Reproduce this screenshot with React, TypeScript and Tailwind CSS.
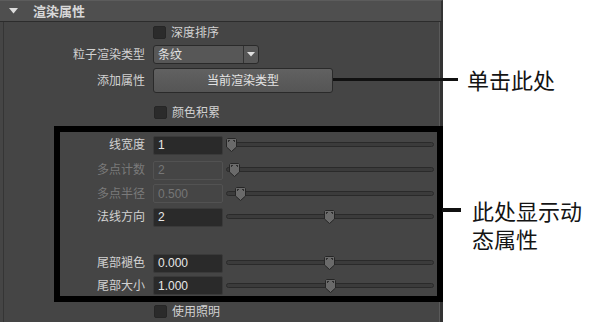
import React from "react";

type Row = {
  label: string;
  value: string;
  disabled: boolean;
  thumb: string;
  h: string;
};

const rowsTop: Row[] = [
  { label: "线宽度", value: "1", disabled: false, thumb: "left-[0px]", h: "h-[26px]" },
  { label: "多点计数", value: "2", disabled: true, thumb: "left-[3px]", h: "h-[24px]" },
  { label: "多点半径", value: "0.500", disabled: true, thumb: "left-[9px]", h: "h-[23px]" },
  { label: "法线方向", value: "2", disabled: false, thumb: "left-[98px]", h: "h-[24px]" },
];
const rowsBottom: Row[] = [
  { label: "尾部褪色", value: "0.000", disabled: false, thumb: "left-[98px]", h: "h-[24px]" },
  { label: "尾部大小", value: "1.000", disabled: false, thumb: "left-[99px]", h: "h-[21px]" },
];

function Thumb() {
  return (
    <svg width="11" height="14" viewBox="0 0 11 14" className="block">
      <polygon
        points="0.5,1.5 1.5,0.5 9.5,0.5 10.5,1.5 10.5,9 5.5,13.5 0.5,9"
        fill="#6a6a6a"
        stroke="#262626"
        strokeWidth="1"
      />
      <line x1="2.5" y1="2" x2="2.5" y2="4" stroke="#2e2e2e" strokeWidth="1" />
      <line x1="2" y1="2.5" x2="4" y2="2.5" stroke="#2e2e2e" strokeWidth="1" />
      <line x1="8.5" y1="2" x2="8.5" y2="4" stroke="#2e2e2e" strokeWidth="1" />
      <line x1="7" y1="2.5" x2="9" y2="2.5" stroke="#2e2e2e" strokeWidth="1" />
    </svg>
  );
}

function SliderRow({ row }: { row: Row }) {
  return (
    <div className={`flex items-center ${row.h}`}>
      <div
        className={`w-[85px] text-right leading-none ${
          row.disabled ? "text-[#7a7a7a]" : "text-[#d2d2d2]"
        }`}
      >
        {row.label}
      </div>
      <div
        className={`ml-[8px] w-[70px] h-[19px] rounded-[2px] border flex items-center pl-[4px] leading-none ${
          row.disabled
            ? "bg-[#454545] border-[#525252] text-[#767676]"
            : "bg-[#2a2a2a] border-[#3a3a3a] text-[#e8e8e8]"
        }`}
      >
        {row.value}
      </div>
      <div className="ml-[3px] w-[208px] relative h-[14px]">
        <div className="absolute left-0 right-0 top-[4px] h-[5px] rounded-full border border-[#2a2a2a] bg-[#3b3b3b]" />
        <div className={`absolute top-0 ${row.thumb}`}>
          <Thumb />
        </div>
      </div>
    </div>
  );
}

function Checkbox({ label }: { label: string }) {
  return (
    <div className="flex items-center">
      <div className="w-[13px] h-[13px] rounded-[2px] bg-[#2b2b2b] border border-[#262626]" />
      <div className="ml-[5px] text-[#d2d2d2] leading-none">{label}</div>
    </div>
  );
}

export default function App() {
  return (
    <div
      className="relative w-[605px] h-[322px] flex bg-white overflow-hidden text-[12px]"
      style={{ fontFamily: '"Liberation Sans", "Noto Sans CJK SC", sans-serif' }}
    >
      {/* Panel */}
      <div className="w-[443px] h-[322px] bg-[#454545] flex flex-col">
        {/* Header */}
        <div className="h-[22px] shrink-0 bg-[#4f4f4f] border-t border-[#5c5c5c] border-b border-b-[#2c2c2c] border-r-[2px] border-r-[#333333] flex items-center">
          <svg width="9" height="6" viewBox="0 0 9 6" className="ml-[9px]">
            <polygon points="0,0 9,0 4.5,5.5" fill="#dcdcdc" />
          </svg>
          <div className="ml-[15px] font-bold text-[13px] text-[#d8d8d8] leading-none">
            渲染属性
          </div>
        </div>
        {/* Body */}
        <div className="flex-1 ml-[3px] border-l border-[#353535] border-r-[3px] border-r-[#333333] flex flex-col">
          <div className="flex-1 border-r border-[#5a5a5a] flex flex-col">
            <div className="h-[21px] flex items-center pl-[149px]">
              <Checkbox label="深度排序" />
            </div>
            <div className="h-[23px] flex items-center">
              <div className="w-[141px] text-right text-[#d2d2d2] leading-none">粒子渲染类型</div>
              <div className="ml-[8px] w-[106px] h-[19px] rounded-[3px] border border-[#2a2a2a] bg-[#575757] flex items-center">
                <div className="flex-1 pl-[4px] text-[#e2e2e2] leading-none">条纹</div>
                <div className="w-[15px] h-full border-l border-[#333333] flex items-center justify-center">
                  <svg width="8" height="5" viewBox="0 0 8 5">
                    <polygon points="0,0 8,0 4,4.5" fill="#e0e0e0" />
                  </svg>
                </div>
              </div>
            </div>
            <div className="h-[29px] flex items-center">
              <div className="w-[141px] text-right text-[#d2d2d2] leading-none">添加属性</div>
              <div className="ml-[8px] w-[180px] h-[25px] rounded-[3px] border border-[#2a2a2a] bg-gradient-to-b from-[#616161] to-[#555555] flex items-center justify-center text-[#e4e4e4] leading-none">
                当前渲染类型
              </div>
            </div>
            <div className="h-[31px] flex items-start pt-[11px] pl-[150px]">
              <Checkbox label="颜色积累" />
            </div>
            {/* Highlight box */}
            <div className="ml-[50px] mr-[-4px] border-[6px] border-black flex flex-col">
              {rowsTop.map((r) => (
                <SliderRow key={r.label} row={r} />
              ))}
              <div className="h-[22px]" />
              {rowsBottom.map((r) => (
                <SliderRow key={r.label} row={r} />
              ))}
            </div>
            <div className="pt-[3px] pl-[150px]">
              <Checkbox label="使用照明" />
            </div>
          </div>
        </div>
      </div>

      {/* Annotations */}
      <div
        className="flex-1 flex flex-col pt-[66px] text-[22px] leading-[26px] text-[#141414]"
        style={{ fontFamily: '"Noto Sans CJK SC", sans-serif' }}
      >
        <div className="pl-[24px]">单击此处</div>
        <div className="pl-[29px] mt-[105px] flex flex-col gap-[2px]">
          <div>此处显示动</div>
          <div>态属性</div>
        </div>
      </div>

      {/* Callout lines */}
      <div className="absolute left-[333px] top-[78px] w-[125px] h-[3px] bg-[#111111]" />
      <div className="absolute left-[442px] top-[208px] w-[19px] h-[4px] bg-[#111111]" />
    </div>
  );
}
